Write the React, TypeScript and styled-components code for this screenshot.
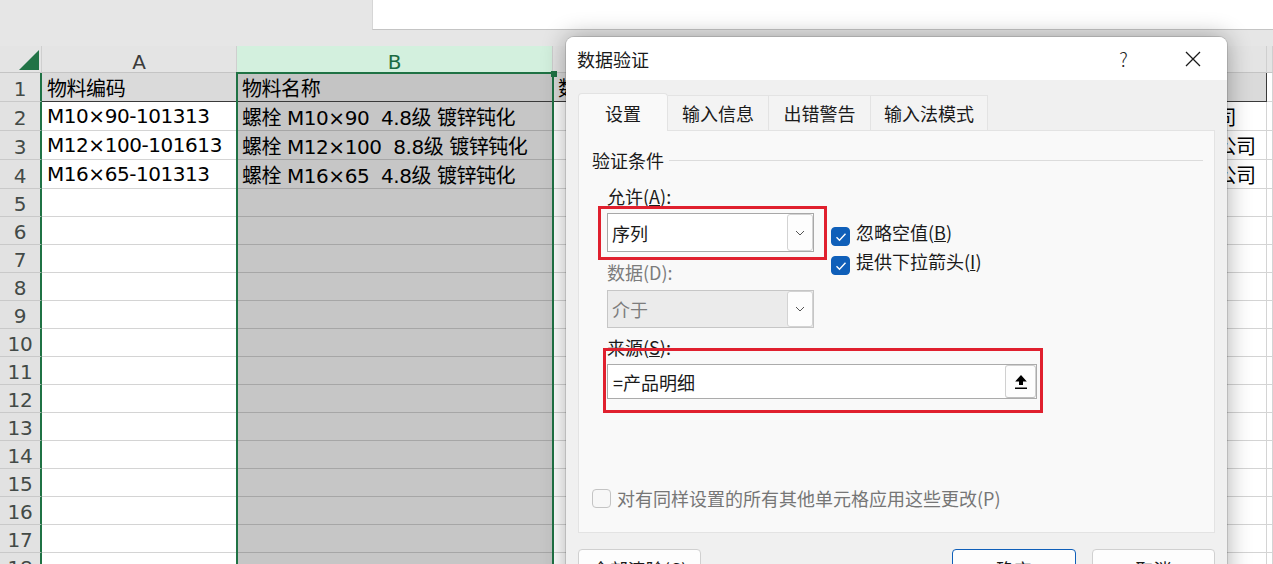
import React from "react";
import styled, { createGlobalStyle } from "styled-components";

const SHEET_FONT = `"DejaVu Sans", "Noto Sans CJK SC", sans-serif`;
const UI_FONT = `"Noto Sans CJK SC", "Noto Sans", sans-serif`;
const GREEN = "#1f7244";
const RED = "#e0202e";

type Tone = "plain" | "sel" | "head" | "headSel";
const BG: Record<Tone, string> = {
  plain: "#ffffff",
  sel: "#c6c6c6",
  head: "#dadada",
  headSel: "#c4c4c4",
};
const LINE: Record<Tone, string> = {
  plain: "#d4d4d4",
  sel: "#a6a6a6",
  head: "#3a3a3a",
  headSel: "#3a3a3a",
};

const GlobalStyle = createGlobalStyle`
  html, body { margin: 0; padding: 0; background: #e6e6e6; }
  body { overflow: hidden; }
  * { box-sizing: border-box; }
`;

const Page = styled.div`
  position: relative;
  width: 1273px;
  height: 564px;
  overflow: hidden;
  background: #e6e6e6;
  display: flex;
  flex-direction: column;
`;

const TopBar = styled.div`
  display: flex;
  height: 30px;
  flex: none;
`;
const NameArea = styled.div`
  width: 372px;
  flex: none;
`;
const FormulaBox = styled.div`
  flex: 1;
  background: #fff;
  border-left: 1px solid #d6d6d6;
  border-bottom: 1px solid #c4c4c4;
`;
const Gap = styled.div`
  height: 16px;
  flex: none;
`;

const Sheet = styled.div`
  display: grid;
  grid-template-columns: 42px 195px 316px 457px 257px 1fr;
  grid-template-rows: 27px repeat(4, 29px) repeat(14, 28px);
  flex: none;
`;

const Corner = styled.div`
  background: #e4e4e4;
  border-right: 1px solid #cfcfcf;
  border-bottom: 1px solid #c4c4c4;
  display: flex;
  align-items: flex-end;
  justify-content: flex-end;
  padding: 0 2px 2px 0;
`;

const ColHead = styled.div<{ $sel?: boolean }>`
  display: flex;
  align-items: center;
  justify-content: center;
  padding-top: 5px;
  font: 20px ${SHEET_FONT};
  color: ${(p) => (p.$sel ? "#1a6b42" : "#3b3b3b")};
  background: ${(p) => (p.$sel ? "#d3f0de" : "#e4e4e4")};
  border-right: 1px solid #cfcfcf;
  border-bottom: 1px solid ${(p) => (p.$sel ? GREEN : "#c4c4c4")};
`;

const RowHead = styled.div`
  display: flex;
  align-items: center;
  justify-content: center;
  padding-top: 3px;
  font: 20px ${SHEET_FONT};
  letter-spacing: -0.3px;
  color: #434a47;
  background: #e2e2e2;
  border-bottom: 1px solid #c9c9c9;
  border-right: 2px solid ${GREEN};
`;

const Cell = styled.div<{ $tone: Tone }>`
  display: flex;
  align-items: center;
  padding-left: 5px;
  white-space: pre;
  overflow: hidden;
  font: 20px ${SHEET_FONT};
  letter-spacing: -0.45px;
  color: #000;
  background: ${(p) => BG[p.$tone]};
  border-right: 1px solid ${(p) => LINE[p.$tone]};
  border-bottom: 1px solid ${(p) => LINE[p.$tone]};
`;

const SelectionFrame = styled.div`
  position: absolute;
  left: 236px;
  top: 72px;
  width: 318px;
  height: 520px;
  border: 2px solid ${GREEN};
  pointer-events: none;
`;
const FillHandle = styled.div`
  position: absolute;
  right: -5px;
  top: -3px;
  width: 6px;
  height: 6px;
  background: ${GREEN};
`;

/* ---------- dialog ---------- */

const Dialog = styled.div`
  position: absolute;
  left: 566px;
  top: 37px;
  width: 661px;
  height: 580px;
  background: #f0f0f0;
  border-radius: 8px 8px 0 0;
  box-shadow: 0 0 0 1px rgba(0, 0, 0, 0.12), 0 0 24px rgba(0, 0, 0, 0.33);
  display: flex;
  flex-direction: column;
  font-family: ${UI_FONT};
  color: #1a1a1a;
`;

const TitleBar = styled.div`
  height: 43px;
  flex: none;
  background: #fff;
  border-radius: 8px 8px 0 0;
  display: flex;
  align-items: center;
`;
const Title = styled.div`
  flex: 1;
  padding-left: 11px;
  font-size: 18px;
  line-height: 24px;
`;
const CapBtn = styled.div`
  width: 69px;
  height: 43px;
  display: flex;
  align-items: center;
  justify-content: center;
  font-size: 19px;
  font-weight: 300;
  color: #222;
`;

const Body = styled.div`
  flex: 1;
  padding: 13px 12px 0 12px;
  display: flex;
  flex-direction: column;
`;

const TabRow = styled.div`
  display: flex;
  align-items: flex-end;
  height: 37px;
  flex: none;
  position: relative;
  z-index: 1;
`;
const Tab = styled.div<{ $active?: boolean; $w: number; $first?: boolean }>`
  width: ${(p) => p.$w}px;
  height: ${(p) => (p.$active ? 38 : 35)}px;
  margin-bottom: ${(p) => (p.$active ? -1 : 0)}px;
  display: flex;
  align-items: center;
  justify-content: center;
  font-size: 18px;
  line-height: 24px;
  background: ${(p) => (p.$active ? "#f9f9f9" : "#f3f3f3")};
  border-top: 1px solid #e3e3e3;
  border-right: 1px solid #e3e3e3;
  border-left: ${(p) => (p.$first ? "1px solid #e3e3e3" : "none")};
  border-radius: ${(p) => (p.$active ? "4px 4px 0 0" : "0")};
`;

const Panel = styled.div`
  height: 403px;
  flex: none;
  background: #f9f9f9;
  border: 1px solid #e3e3e3;
  padding: 17px 11px 21px 13px;
  display: flex;
  flex-direction: column;
`;

const GroupTitle = styled.div`
  display: flex;
  align-items: center;
  gap: 5px;
  height: 24px;
  font-size: 18px;
  line-height: 24px;
  &::after {
    content: "";
    flex: 1;
    height: 1px;
    background: #dcdcdc;
  }
`;

const Fields = styled.div`
  margin-top: 12px;
  padding-left: 15px;
  display: flex;
  flex-direction: column;
`;
const TopArea = styled.div`
  display: flex;
`;
const LeftCol = styled.div`
  width: 207px;
  flex: none;
  display: flex;
  flex-direction: column;
`;
const Label = styled.div<{ $dim?: boolean; $mt?: number }>`
  height: 24px;
  line-height: 24px;
  font-size: 18px;
  margin-top: ${(p) => p.$mt ?? 0}px;
  color: ${(p) => (p.$dim ? "#7c7c7c" : "#1a1a1a")};
  white-space: nowrap;
`;
const Select = styled.div<{ $disabled?: boolean; $h: number; $mt: number }>`
  height: ${(p) => p.$h}px;
  margin-top: ${(p) => p.$mt}px;
  background: ${(p) => (p.$disabled ? "#ebebeb" : "#fff")};
  border: 1px solid ${(p) => (p.$disabled ? "#c6c6c6" : "#a8a8a8")};
  display: flex;
  align-items: stretch;
  justify-content: space-between;
  padding-left: 4px;
  font-size: 18px;
  color: ${(p) => (p.$disabled ? "#7c7c7c" : "#1a1a1a")};
`;
const SelectText = styled.span`
  display: flex;
  align-items: center;
`;
const ChevronBox = styled.div`
  width: 26px;
  border: 1px solid #d3d3d3;
  border-radius: 3px;
  background: #fdfdfd;
  display: flex;
  align-items: center;
  justify-content: center;
`;

const CheckCol = styled.div`
  margin-left: 17px;
  padding-top: 36px;
  display: flex;
  flex-direction: column;
  gap: 3px;
`;
const CheckRow = styled.div<{ $dim?: boolean; $center?: boolean }>`
  display: flex;
  align-items: ${(p) => (p.$center ? "center" : "flex-start")};
  gap: 6px;
  height: 26px;
  font-size: 18px;
  line-height: 24px;
  white-space: nowrap;
  color: ${(p) => (p.$dim ? "#767676" : "#1a1a1a")};
`;
const CheckBox = styled.div<{ $checked?: boolean; $offset?: number }>`
  width: 19px;
  height: 19px;
  flex: none;
  margin-top: ${(p) => p.$offset ?? 7}px;
  border-radius: 4px;
  background: ${(p) => (p.$checked ? "#0f5fb9" : "#f7f7f7")};
  border: 1px solid ${(p) => (p.$checked ? "#0f5fb9" : "#c4c4c4")};
  display: flex;
  align-items: center;
  justify-content: center;
`;

const SourceInput = styled.div`
  width: 430px;
  height: 35px;
  margin-top: 5px;
  background: #fff;
  border: 1px solid #ababab;
  display: flex;
  align-items: stretch;
  justify-content: space-between;
  padding-left: 5px;
  font-size: 18px;
`;
const RefButton = styled.div`
  width: 31px;
  border: 1px solid #d0d0d0;
  border-bottom-color: #bdbdbd;
  border-radius: 3px;
  background: #fdfdfd;
  display: flex;
  align-items: center;
  justify-content: center;
`;

const Spring = styled.div`
  flex: 1;
`;

const ButtonRow = styled.div`
  margin-top: 16px;
  display: flex;
  align-items: flex-start;
  gap: 16px;
`;
const Button = styled.div<{ $primary?: boolean; $w: number }>`
  width: ${(p) => p.$w}px;
  height: 40px;
  border-radius: 4px;
  background: #fdfdfd;
  border: 1px solid ${(p) => (p.$primary ? "#0f5fb9" : "#d0d0d0")};
  display: flex;
  align-items: center;
  justify-content: center;
  font-size: 18px;
`;

const RedBox = styled.div<{ $l: number; $t: number; $w: number; $h: number }>`
  position: absolute;
  left: ${(p) => p.$l}px;
  top: ${(p) => p.$t}px;
  width: ${(p) => p.$w}px;
  height: ${(p) => p.$h}px;
  border: 3px solid ${RED};
  pointer-events: none;
`;

const Chevron = () => (
  <svg width="10" height="6" viewBox="0 0 10 6">
    <path d="M1 1 L5 5 L9 1" fill="none" stroke="#555" strokeWidth="1" />
  </svg>
);

const Check = () => (
  <svg width="12" height="10" viewBox="0 0 12 10">
    <path d="M1.5 5.2 L4.5 8.2 L10.5 1.8" fill="none" stroke="#fff" strokeWidth="1.4" />
  </svg>
);

const CloseIcon = () => (
  <svg width="16" height="16" viewBox="0 0 16 16">
    <path d="M1 1 L15 15 M15 1 L1 15" stroke="#1a1a1a" strokeWidth="1.3" />
  </svg>
);

const UpArrow = () => (
  <svg width="14" height="16" viewBox="0 0 14 16">
    <polygon points="7,1 12.8,7.5 9,7.5 9,11 5,11 5,7.5 1.2,7.5" fill="#000" />
    <rect x="1" y="13.5" width="12" height="1.5" fill="#000" />
  </svg>
);

const ROWS: string[][] = [
  ["物料编码", "物料名称", "数量", "供应商", ""],
  ["M10×90-101313", "螺栓 M10×90  4.8级 镀锌钝化", "", " 上海紧固件制造有限公司", ""],
  ["M12×100-101613", "螺栓 M12×100  8.8级 镀锌钝化", "", " 浙江温州市标准件有限公司", ""],
  ["M16×65-101313", "螺栓 M16×65  4.8级 镀锌钝化", "", " 江苏无锡市紧固件有限公司", ""],
  ...Array.from({ length: 14 }, () => ["", "", "", "", ""]),
];

const toneFor = (r: number, c: number): Tone => {
  if (c === 4) return "plain";
  if (r === 0) return c === 1 ? "headSel" : "head";
  return c === 1 ? "sel" : "plain";
};

export default function App() {
  return (
    <>
      <GlobalStyle />
      <Page>
        <TopBar>
          <NameArea />
          <FormulaBox />
        </TopBar>
        <Gap />
        <Sheet>
          <Corner>
            <svg width="20" height="20" viewBox="0 0 20 20">
              <polygon points="0,20 20,20 20,0" fill="#217346" />
            </svg>
          </Corner>
          <ColHead>A</ColHead>
          <ColHead $sel>B</ColHead>
          <ColHead>C</ColHead>
          <ColHead>D</ColHead>
          <ColHead />
          {ROWS.map((row, r) => (
            <React.Fragment key={r}>
              <RowHead>{r + 1}</RowHead>
              {row.map((text, c) => (
                <Cell key={c} $tone={toneFor(r, c)}>
                  {text}
                </Cell>
              ))}
            </React.Fragment>
          ))}
        </Sheet>
        <SelectionFrame>
          <FillHandle />
        </SelectionFrame>

        <Dialog>
          <TitleBar>
            <Title>数据验证</Title>
            <CapBtn>?</CapBtn>
            <CapBtn>
              <CloseIcon />
            </CapBtn>
          </TitleBar>
          <Body>
            <TabRow>
              <Tab $active $first $w={90}>设置</Tab>
              <Tab $w={101}>输入信息</Tab>
              <Tab $w={102}>出错警告</Tab>
              <Tab $w={117}>输入法模式</Tab>
            </TabRow>
            <Panel>
              <GroupTitle>验证条件</GroupTitle>
              <Fields>
                <TopArea>
                  <LeftCol>
                    <Label>
                      允许(<u>A</u>):
                    </Label>
                    <Select $h={39} $mt={5}>
                      <SelectText>序列</SelectText>
                      <ChevronBox>
                        <Chevron />
                      </ChevronBox>
                    </Select>
                    <Label $dim $mt={8}>
                      数据(D):
                    </Label>
                    <Select $disabled $h={38} $mt={6}>
                      <SelectText>介于</SelectText>
                      <ChevronBox>
                        <Chevron />
                      </ChevronBox>
                    </Select>
                  </LeftCol>
                  <CheckCol>
                    <CheckRow>
                      <CheckBox $checked>
                        <Check />
                      </CheckBox>
                      <span>
                        忽略空值(<u>B</u>)
                      </span>
                    </CheckRow>
                    <CheckRow>
                      <CheckBox $checked>
                        <Check />
                      </CheckBox>
                      <span>
                        提供下拉箭头(<u>I</u>)
                      </span>
                    </CheckRow>
                  </CheckCol>
                </TopArea>
                <Label $mt={7}>
                  来源(<u>S</u>):
                </Label>
                <SourceInput>
                  <SelectText>=产品明细</SelectText>
                  <RefButton>
                    <UpArrow />
                  </RefButton>
                </SourceInput>
              </Fields>
              <Spring />
              <CheckRow $dim $center>
                <CheckBox $offset={0} />
                <span>对有同样设置的所有其他单元格应用这些更改(P)</span>
              </CheckRow>
            </Panel>
            <ButtonRow>
              <Button $w={123}>全部清除(C)</Button>
              <Spring />
              <Button $primary $w={124}>
                确定
              </Button>
              <Button $w={123}>取消</Button>
            </ButtonRow>
          </Body>
          <RedBox $l={32} $t={169} $w={229} $h={54} />
          <RedBox $l={37} $t={311} $w={440} $h={65} />
        </Dialog>
      </Page>
    </>
  );
}
